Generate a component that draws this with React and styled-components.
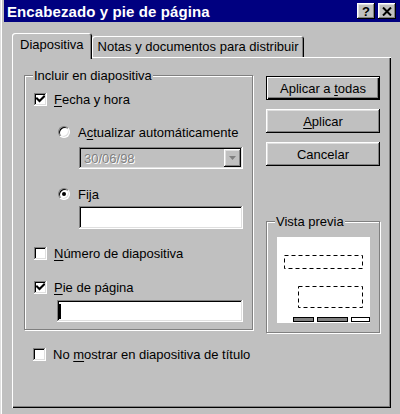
import React from 'react';
import styled, { createGlobalStyle, css } from 'styled-components';

const Global = createGlobalStyle`
  html, body { margin: 0; padding: 0; background: #c0c0c0; }
  body {
    width: 400px; height: 414px; overflow: hidden;
    font-family: "Liberation Sans", Arial, sans-serif;
    font-size: 13px; color: #000;
  }
  u { text-decoration-thickness: 1px; text-underline-offset: 2px; }
`;

const raised = css`
  box-shadow: inset -1px -1px #000, inset 1px 1px #fff, inset -2px -2px #808080, inset 2px 2px #dfdfdf;
`;
const sunken = css`
  box-shadow: inset -1px -1px #fff, inset 1px 1px #808080, inset -2px -2px #dfdfdf, inset 2px 2px #000;
`;

const Window = styled.div`
  width: 400px; height: 414px; box-sizing: border-box;
  padding-left: 4px;
  background: #c0c0c0;
  box-shadow: inset 1px 0 #dfdfdf, inset 2px 0 #fff;
  display: flex; flex-direction: column;
`;

const TitleBar = styled.div`
  height: 22px; background: #000080;
  display: flex; align-items: center;
  padding: 0 4px 0 3px;
`;

const Title = styled.span`
  color: #fff; font-weight: bold; font-size: 15px; letter-spacing: 0.1px;
`;

const Controls = styled.div`
  margin-left: auto; display: flex; gap: 3px;
`;

const CaptionButton = styled.div`
  width: 18px; height: 16px; box-sizing: border-box;
  background: #c0c0c0; ${raised}
  display: flex; align-items: center; justify-content: center;
  font-weight: bold; font-size: 13px; line-height: 1;
`;

const Body = styled.div`
  padding: 11px 0 0 8px;
`;

const TabStrip = styled.div`
  display: flex; align-items: flex-end; height: 24px;
`;

const Tab = styled.div`
  height: ${p => (p.$active ? 26 : 21)}px;
  margin-bottom: ${p => (p.$active ? -2 : 0)}px;
  padding: 0 ${p => p.$pad}px ${p => (p.$active ? 3 : 0)}px;
  box-sizing: border-box;
  background: #c0c0c0;
  border-radius: 3px 3px 0 0;
  position: relative; z-index: ${p => (p.$active ? 1 : 0)};
  display: flex; align-items: center;
  box-shadow: inset 1px 1px #fff, inset -1px 0 #000, inset -2px 0 #808080;
`;

const Panel = styled.div`
  width: 379px; height: 351px; box-sizing: border-box;
  background: #c0c0c0;
  box-shadow: inset 1px 1px #fff, inset -1px -1px #000, inset -2px -2px #808080;
  padding: 18px 11px 0 12px;
  display: grid; grid-template-columns: 229px 114px; column-gap: 13px;
  align-items: start;
`;

const Column = styled.div`
  display: flex; flex-direction: column;
  margin-top: ${p => p.$mt || 0}px;
  gap: ${p => p.$gap || 0}px;
`;

const GroupBox = styled.div`
  position: relative; box-sizing: border-box;
  border: 1px solid #808080;
  box-shadow: inset 1px 1px #fff, 1px 1px #fff;
  display: flex; flex-direction: column; align-items: flex-start;
  padding: ${p => p.$pad};
  margin-top: ${p => p.$mt || 0}px;
  height: ${p => (p.$h ? `${p.$h}px` : 'auto')};
`;

const Legend = styled.span`
  position: absolute; top: -8px; left: 8px;
  padding: 0 1px; background: #c0c0c0; line-height: 15px;
`;

const Row = styled.div`
  display: flex; align-items: center; height: 16px;
  margin-top: ${p => p.$mt || 0}px;
  margin-left: ${p => p.$indent || 0}px;
  gap: ${p => p.$gap || 7}px;
  white-space: nowrap;
`;

const CheckBox = styled.div`
  width: 13px; height: 13px; box-sizing: border-box;
  background: #fff; ${sunken}
  display: flex; align-items: center; justify-content: center;
`;

const Radio = styled.div`
  width: 12px; height: 12px; box-sizing: border-box; border-radius: 50%;
  background: #fff;
  border: 1px solid; border-color: #808080 #fff #fff #808080;
  box-shadow: inset 1px 1px #000, inset -1px -1px #dfdfdf;
  display: flex; align-items: center; justify-content: center;
`;

const Dot = styled.div`
  width: 4px; height: 4px; border-radius: 50%; background: #000;
`;

const Combo = styled.div`
  width: ${p => p.$w}px; height: 22px; box-sizing: border-box;
  margin-top: ${p => p.$mt || 0}px; margin-left: ${p => p.$indent || 0}px;
  background: #c0c0c0; ${sunken}
  display: flex; align-items: center; padding: 2px;
`;

const ComboText = styled.span`
  color: #808080; padding-left: 3px; text-shadow: 1px 1px #fff;
`;

const DropButton = styled.div`
  margin-left: auto; width: 17px; height: 18px; box-sizing: border-box;
  background: #c0c0c0; ${raised}
  display: flex; align-items: center; justify-content: center;
`;

const TextBox = styled.div`
  width: ${p => p.$w}px; height: ${p => p.$h}px; box-sizing: border-box;
  margin-top: ${p => p.$mt || 0}px; margin-left: ${p => p.$indent || 0}px;
  background: #fff; ${sunken}
  display: flex; align-items: center; padding: 0 2px;
`;

const Caret = styled.span`
  width: 2px; height: 15px; background: #000;
`;

const Button = styled.div`
  width: 114px; height: 24px; box-sizing: border-box;
  background: #c0c0c0;
  display: flex; align-items: center; justify-content: center;
  white-space: pre;
  ${p => (p.$default
    ? css`border: 1px solid #000; box-shadow: inset 1px 1px #fff, inset -1px -1px #000, inset -2px -2px #808080;`
    : raised)}
`;

const Preview = styled.div`
  width: 93px; height: 86px; background: #fff; display: flex;
`;

const Check = () => (
  <svg width="9" height="9" viewBox="0 0 9 9">
    <path d="M1 3.5 L3.5 6 L8 1.5" fill="none" stroke="#000" strokeWidth="2" strokeLinecap="square" />
  </svg>
);

const CheckRow = ({ checked, children, mt, indent }) => (
  <Row $mt={mt} $indent={indent}>
    <CheckBox>{checked && <Check />}</CheckBox>
    <span>{children}</span>
  </Row>
);

const RadioRow = ({ checked, children, mt, indent }) => (
  <Row $mt={mt} $indent={indent} $gap={8}>
    <Radio>{checked && <Dot />}</Radio>
    <span>{children}</span>
  </Row>
);

export default function App() {
  return (
    <>
      <Global />
      <Window>
        <TitleBar>
          <Title>Encabezado y pie de página</Title>
          <Controls>
            <CaptionButton>?</CaptionButton>
            <CaptionButton>
              <svg width="10" height="9" viewBox="0 0 10 9">
                <path d="M1 0.5 L9 8.5 M9 0.5 L1 8.5" stroke="#000" strokeWidth="2" />
              </svg>
            </CaptionButton>
          </Controls>
        </TitleBar>
        <Body>
          <TabStrip>
            <Tab $active $pad={8}>Diapositiva</Tab>
            <Tab $pad={6}>Notas y documentos para distribuir</Tab>
          </TabStrip>
          <Panel>
            <Column>
              <GroupBox $pad="0 0 7px 9px">
                <Legend>Incluir en diapositiva</Legend>
                <CheckRow checked mt={15}><u>F</u>echa y hora</CheckRow>
                <RadioRow mt={17} indent={24}>A<u>c</u>tualizar automáticamente</RadioRow>
                <Combo $mt={7} $indent={45} $w={164}>
                  <ComboText>30/06/98</ComboText>
                  <DropButton>
                    <svg width="7" height="4" viewBox="0 0 7 4">
                      <path d="M0 0 H7 L3.5 4 Z" fill="#808080" />
                    </svg>
                  </DropButton>
                </Combo>
                <RadioRow checked mt={17} indent={24}>Fi<u>j</u>a</RadioRow>
                <TextBox $mt={4} $indent={45} $w={164} $h={23} />
                <CheckRow mt={16}><u>N</u>úmero de diapositiva</CheckRow>
                <CheckRow checked mt={18}><u>P</u>ie de página</CheckRow>
                <TextBox $mt={5} $indent={23} $w={186} $h={22}>
                  <Caret />
                </TextBox>
              </GroupBox>
              <CheckRow mt={16} indent={9}>No <u>m</u>ostrar en diapositiva de título</CheckRow>
            </Column>
            <Column $mt={1} $gap={9}>
              <Button $default><span>Aplicar a <u>t</u>odas</span></Button>
              <Button><span><u>A</u>plicar</span></Button>
              <Button><span>Cancelar</span></Button>
              <GroupBox $pad="15px 9px 0 10px" $mt={46} $h={112}>
                <Legend>Vista previa</Legend>
                <Preview>
                  <svg width="93" height="86" viewBox="0 0 93 86">
                    <rect x="7.5" y="18.5" width="78" height="13" fill="none" stroke="#000" strokeDasharray="4 3" />
                    <rect x="21.5" y="49.5" width="64" height="21" fill="none" stroke="#000" strokeDasharray="4 3" />
                    <rect x="16.5" y="80.5" width="20" height="4" fill="#808080" stroke="#000" />
                    <rect x="40.5" y="80.5" width="30" height="4" fill="#808080" stroke="#000" />
                    <rect x="74.5" y="80.5" width="18" height="4" fill="#fff" stroke="#000" />
                  </svg>
                </Preview>
              </GroupBox>
            </Column>
          </Panel>
        </Body>
      </Window>
    </>
  );
}
